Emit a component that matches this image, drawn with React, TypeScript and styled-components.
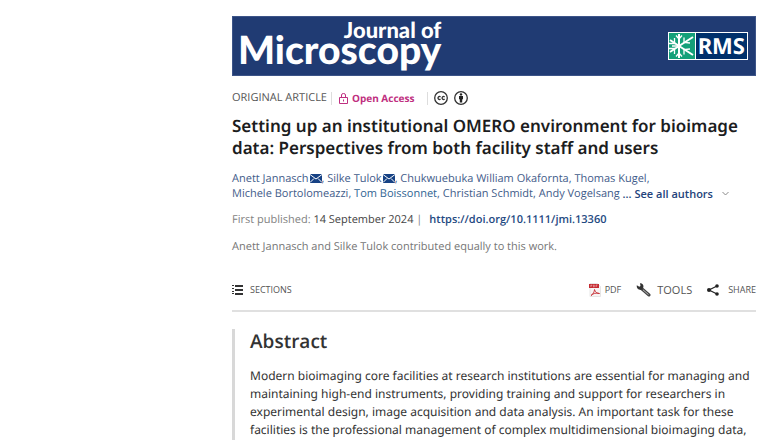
import React from 'react';
import styled, { createGlobalStyle } from 'styled-components';

const GlobalStyle = createGlobalStyle`
  * { box-sizing: border-box; }
  body {
    margin: 0;
    background: #fff;
    color: #333;
    font-family: 'Open Sans', 'Noto Sans', sans-serif;
    font-size: 11px;
    text-rendering: geometricPrecision;
  }
  h1, h2, p { margin: 0; }
  a { color: inherit; text-decoration: none; }
  button { border: 0; padding: 0; background: none; font: inherit; color: inherit; cursor: pointer; }
  svg { display: block; flex: none; }
`;

const Page = styled.main`
  min-height: 100vh;
  padding: 16px 12px 0 232px;
  display: flex;
  flex-direction: column;
`;

const Banner = styled.header`
  display: flex;
  justify-content: space-between;
  align-items: center;
  height: 60px;
  padding: 0 7px 0 5px;
  background: #203b73;
  border: 1px solid #3c5488;
`;

const JournalName = styled.a`
  display: flex;
  flex-direction: column;
  align-items: flex-end;
  padding-bottom: 12px;
  color: #fff;
  font-family: Lato, sans-serif;
  font-weight: 900;
  line-height: 20px;
`;

const NameTop = styled.span`
  font-size: 22px;
`;

const NameMain = styled.span`
  font-size: 39px;
`;

const Society = styled.a`
  display: flex;
  height: 28px;
  border: 1px solid #fff;
  background: #00306b;
  color: #fff;
`;

const Snowflake = styled.span`
  display: flex;
  align-items: center;
  background: #14a079;
  border-right: 1px solid #fff;
`;

const SocietyName = styled.span`
  padding: 0 2px;
  font-family: 'Noto Sans', sans-serif;
  font-weight: 700;
  font-size: 22px;
  line-height: 26px;
`;

const MetaRow = styled.div`
  display: flex;
  align-items: center;
  height: 16px;
  margin-top: 14px;
  line-height: 16px;
`;

const Kind = styled.span`
  font-size: 11px;
  color: #555;
`;

const Divider = styled.span<{ $before: number; $after: number }>`
  width: 1px;
  height: 13px;
  margin: 0 ${(p) => p.$after}px 0 ${(p) => p.$before}px;
  background: #ddd;
`;

const OpenAccess = styled.span`
  display: flex;
  align-items: center;
  gap: 4px;
  font-size: 10px;
  font-weight: 700;
  color: #bf2f80;
`;

const Licence = styled.a`
  display: flex;
  gap: 6px;
`;

const Title = styled.h1`
  margin-top: 9px;
  font-family: 'Noto Sans', sans-serif;
  font-size: 17px;
  line-height: 22px;
  font-weight: 600;
  color: #1c1d1e;
`;

const Authors = styled.div`
  margin-top: 12px;
  line-height: 15px;
  color: #3f5c8a;
`;

const AuthorLine = styled.div`
  display: flex;
  align-items: center;
  white-space: pre;
`;

const MailLink = styled.a`
  margin-left: 1px;
`;

const Highlighted = styled.a`
  && { color: #2f6593; }
`;

const SeeAll = styled.button`
  && {
    display: flex;
    align-items: center;
    gap: 6px;
    font-weight: 600;
    color: #23427a;
  }
`;

const Published = styled.p`
  display: flex;
  margin-top: 10px;
  line-height: 17px;
  color: #828282;
  white-space: pre;
`;

const PublishedDate = styled.span`
  color: #444;
`;

const Doi = styled.a`
  && { color: #1f4a82; }
  margin-left: 7px;
  font-weight: 600;
`;

const Note = styled.p`
  margin-top: 10px;
  line-height: 17px;
  color: #767676;
`;

const Toolbar = styled.nav`
  display: flex;
  align-items: center;
  height: 44px;
  margin-top: 13px;
  padding-top: 2px;
  border-bottom: 2px solid #e0e0e0;
  gap: 15px;
`;

const Tool = styled.button<{ $size?: number; $gap?: number; $push?: boolean }>`
  && {
    display: flex;
    align-items: center;
    gap: ${(p) => p.$gap ?? 7}px;
    margin-left: ${(p) => (p.$push ? 'auto' : '0')};
    font-size: ${(p) => p.$size ?? 9}px;
    line-height: 16px;
    color: #555;
  }
`;

const Abstract = styled.section`
  flex: 1;
  margin-top: 17px;
  padding-left: 15px;
  border-left: 3px solid #d8d8d8;
`;

const Heading = styled.h2`
  font-size: 19px;
  line-height: 24px;
  font-weight: 600;
  color: #333;
`;

const Body = styled.p`
  margin-top: 14px;
  font-family: 'Noto Sans', sans-serif;
  font-size: 12px;
  line-height: 18px;
  color: #333;
`;

const FlakeIcon = () => (
  <svg width="26" height="26" viewBox="0 0 26 26" fill="none" stroke="#fff">
    <path d="M10 1v24M1 7l9 6L1 19M10 13L24 4M10 13l14 9" strokeWidth="2" />
    <path d="M7 2.500L10 6l3-3.500M7 23.500L10 20l3 3.500M0 10.500h5.500V5M0 15.500h5.500V21M21 10l-6-.500V4.500M21 16l-6 .500v5M3 13h9" strokeWidth="1.300" />
  </svg>
);

const LockIcon = () => (
  <svg width="9" height="11" viewBox="0 0 9 11" fill="none" stroke="#bf2f80">
    <path d="M.5 4.500h8v6h-8zM2.500 4.500V2Q2.500.5 4.500.5T6.500 2v2.500" />
    <path d="M4.500 6.500v2" />
  </svg>
);

const CcIcon = () => (
  <svg width="14" height="14" viewBox="0 0 14 14" fill="none" stroke="#333" strokeWidth="1.300">
    <circle cx="7" cy="7" r="6.300" />
    <path d="M6.500 5.900a1.500 1.500 0 1 0 0 2.200M10.600 5.900a1.500 1.500 0 1 0 0 2.200" />
  </svg>
);

const ByIcon = () => (
  <svg width="14" height="14" viewBox="0 0 14 14" fill="#222">
    <circle cx="7" cy="7" r="6.300" fill="none" stroke="#333" strokeWidth="1.300" />
    <circle cx="7" cy="3.400" r="1.200" />
    <path d="M5 5h4v3.200H8.200v3.300H5.800V8.200H5z" />
  </svg>
);

const MailIcon = () => (
  <svg width="12" height="9" viewBox="0 0 12 9">
    <path fill="#174284" d="M0 0h12v9H0z" />
    <path fill="none" stroke="#fff" d="M0 .5l6 4.500 6-4.500M0 8.500l4-4M12 8.500l-4-4" />
  </svg>
);

const ChevronIcon = () => (
  <svg width="7" height="5" viewBox="0 0 7 5" fill="none" stroke="#8a8a8a">
    <path d="M.5 1l3 3 3-3" />
  </svg>
);

const ListIcon = () => (
  <svg width="11" height="10" viewBox="0 0 11 10" fill="#333">
    <path d="M0 0h2v1H0zM0 3h2v1H0zM0 6h2v1H0zM0 8h2v1H0zM3 0h8v2H3zM3 4h8v2H3zM3 8h8v2H3z" />
  </svg>
);

const PdfIcon = () => (
  <svg width="12" height="14" viewBox="0 0 12 14">
    <path d="M1 .5h7.500l3 3v10H1z" fill="#f7f4f4" stroke="#ddd" strokeWidth=".7" />
    <path d="M0 1h10v4H0z" fill="#c52b32" />
    <path d="M1.800 4V2h1v1h-1M4.500 2v2h.8V2zM7 4V2h1.600M7 3h1" fill="none" stroke="#f1c2c4" strokeWidth=".5" />
    <path d="M2 12.500c2-1 3.500-4 3.500-6 .5 2.500 2.500 4 5 4C7 9.500 4 10.500 2 12.500z" fill="none" stroke="#c52b32" strokeWidth=".9" />
  </svg>
);

const WrenchIcon = () => (
  <svg width="15" height="14" viewBox="0 0 15 14">
    <path d="M5.500 5.500l7.500 6.500" stroke="#444" strokeWidth="3" strokeLinecap="round" />
    <path d="M7 6.800l5.500 4.800" stroke="#bbb" strokeWidth="1" />
    <path d="M.8 2.200l2.500 1.600L4.500 3 4 .3c2.500 0 4 2 3.300 4.200L5.500 6.800C3 7.300.3 5.500.8 2.200z" fill="#333" />
  </svg>
);

const ShareIcon = () => (
  <svg width="12" height="12" viewBox="0 0 12 12" fill="#222">
    <path d="M10 2L2 6l8 4" fill="none" stroke="#222" strokeWidth="1.200" />
    <circle cx="10" cy="2" r="1.800" />
    <circle cx="2" cy="6" r="2" />
    <circle cx="10" cy="10" r="1.800" />
  </svg>
);

export default function App() {
  return (
    <>
      <GlobalStyle />
      <Page>
        <Banner>
          <JournalName href="#journal">
            <NameTop>Journal of</NameTop>
            <NameMain>Microscopy</NameMain>
          </JournalName>
          <Society href="#rms">
            <Snowflake><FlakeIcon /></Snowflake>
            <SocietyName>RMS</SocietyName>
          </Society>
        </Banner>

        <MetaRow>
          <Kind>ORIGINAL ARTICLE</Kind>
          <Divider $before={4} $after={7} />
          <OpenAccess><LockIcon />Open Access</OpenAccess>
          <Divider $before={13} $after={6} />
          <Licence href="#licence" aria-label="Creative Commons Attribution"><CcIcon /><ByIcon /></Licence>
        </MetaRow>

        <Title>
          Setting up an institutional OMERO environment for bioimage data: Perspectives from both facility staff and users
        </Title>

        <Authors>
          <AuthorLine>
            <a href="#jannasch">Anett Jannasch</a>
            <MailLink href="#mail-jannasch" aria-label="Email Anett Jannasch"><MailIcon /></MailLink>
            <span>, </span>
            <a href="#tulok">Silke Tulok</a>
            <MailLink href="#mail-tulok" aria-label="Email Silke Tulok"><MailIcon /></MailLink>
            <span>, </span>
            <a href="#okafornta">Chukwuebuka William Okafornta</a>
            <span>, </span>
            <a href="#kugel">Thomas Kugel</a>
            <span>,</span>
          </AuthorLine>
          <AuthorLine>
            <a href="#bortolomeazzi">Michele Bortolomeazzi</a>
            <span>, </span>
            <Highlighted href="#boissonnet">Tom Boissonnet</Highlighted>
            <span>, </span>
            <a href="#schmidt">Christian Schmidt</a>
            <span>, </span>
            <a href="#vogelsang">Andy Vogelsang</a>
            <span> </span>
            <SeeAll>... See all authors <ChevronIcon /></SeeAll>
          </AuthorLine>
        </Authors>

        <Published>
          <span>First published: </span>
          <PublishedDate>14 September 2024</PublishedDate>
          <span>{' |'}</span>
          <Doi href="https://doi.org/10.1111/jmi.13360">https://doi.org/10.1111/jmi.13360</Doi>
        </Published>

        <Note>Anett Jannasch and Silke Tulok contributed equally to this work.</Note>

        <Toolbar>
          <Tool><ListIcon />SECTIONS</Tool>
          <Tool $push $gap={4}><PdfIcon />PDF</Tool>
          <Tool $size={11} $gap={6}><WrenchIcon />TOOLS</Tool>
          <Tool $gap={9}><ShareIcon />SHARE</Tool>
        </Toolbar>

        <Abstract>
          <Heading>Abstract</Heading>
          <Body>
            Modern bioimaging core facilities at research institutions are essential for managing and maintaining
            high-end instruments, providing training and support for researchers in experimental design, image
            acquisition and data analysis. An important task for these facilities is the professional management of
            complex multidimensional bioimaging data,
          </Body>
        </Abstract>
      </Page>
    </>
  );
}
